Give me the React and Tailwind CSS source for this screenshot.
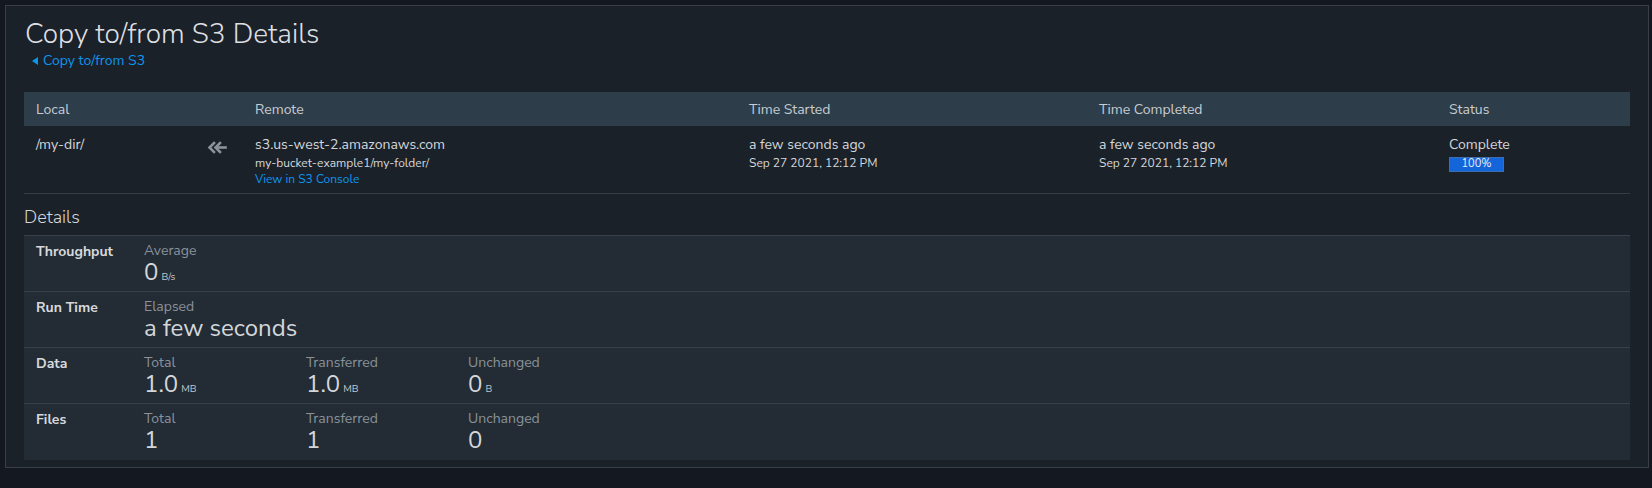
import React from 'react';

const font = { fontFamily: '"Nunito Sans", Lato, "Open Sans", sans-serif' };

const BackArrows = () => (
  <svg width="20" height="13" viewBox="0 0 20 13" fill="none" stroke="#8b939b" strokeWidth="2.6" strokeLinecap="square">
    <path d="M7 2 L2.5 6.5 L7 11" />
    <path d="M13 2 L8.5 6.5 L13 11" />
    <path d="M9.5 6.5 L18.5 6.5" />
  </svg>
);

const Stat = ({ label, value, unit }) => (
  <div className="w-[162px]">
    <div className="text-[14px] leading-[16px] text-[#89929a]">{label}</div>
    <div className="flex items-baseline leading-[26px] text-[#d3d7db]">
      <span className="text-[24px]">{value}</span>
      {unit && <span className="ml-[3px] text-[10px] text-[#c3c8cd]">{unit}</span>}
    </div>
  </div>
);

const DetailRow = ({ name, children, last }) => (
  <div className={`flex border-t border-[#36414b] pl-[12px] pt-[7px] ${last ? 'h-[57px]' : 'h-[56px]'}`}>
    <div className="w-[108px] text-[14px] font-bold leading-[18px] text-[#d6d9dc]">{name}</div>
    <div className="flex">{children}</div>
  </div>
);

export default function App() {
  const transfer = {
    local: '/my-dir/',
    host: 's3.us-west-2.amazonaws.com',
    path: 'my-bucket-example1/my-folder/',
    started: 'a few seconds ago',
    startedAt: 'Sep 27 2021, 12:12 PM',
    completed: 'a few seconds ago',
    completedAt: 'Sep 27 2021, 12:12 PM',
    status: 'Complete',
    progress: 100
  };

  return (
    <div className="h-[488px] w-[1652px] bg-[#141820] pt-[5px] pl-[5px]" style={font}>
      <div className="h-[463px] w-[1644px] border border-[#3a3f47] bg-[#1b2129] px-[18px] pt-[12px]">
        <h1 className="text-[28px] font-light leading-[32px] text-[#dcdfe2] pl-[1px]">Copy to/from S3 Details</h1>
        <a className="mt-[3px] flex items-center pl-[8px] text-[14px] leading-[16px] text-[#0b96ee]">
          <span className="mr-[5px] inline-block h-0 w-0 border-y-[4.5px] border-r-[6px] border-y-transparent border-r-[#0b96ee]" />
          Copy to/from S3
        </a>

        {/* transfer summary */}
        <div className="mt-[23px] grid grid-cols-[171px_48px_494px_350px_350px_1fr] text-[14px]">
          <div className="col-span-6 grid grid-cols-subgrid h-[34px] items-center bg-[#2d3d4a] text-[#c7ccd1]">
            <div className="pl-[12px]">Local</div>
            <div />
            <div className="pl-[12px]">Remote</div>
            <div className="pl-[12px]">Time Started</div>
            <div className="pl-[12px]">Time Completed</div>
            <div className="pl-[12px]">Status</div>
          </div>
          <div className="col-span-6 grid grid-cols-subgrid h-[68px] border-b border-[#333d47] pt-[10px] text-[#d3d7db]">
            <div className="pl-[12px] leading-[18px]">{transfer.local}</div>
            <div className="pt-[5px] pl-[12px]"><BackArrows /></div>
            <div className="pl-[12px]">
              <div className="leading-[18px]">{transfer.host}</div>
              <div className="text-[12px] leading-[18px]">{transfer.path}</div>
              <div className="text-[12px] leading-[15px] text-[#0b96ee]">View in S3 Console</div>
            </div>
            <div className="pl-[12px]">
              <div className="leading-[18px]">{transfer.started}</div>
              <div className="text-[12px] leading-[18px]">{transfer.startedAt}</div>
            </div>
            <div className="pl-[12px]">
              <div className="leading-[18px]">{transfer.completed}</div>
              <div className="text-[12px] leading-[18px]">{transfer.completedAt}</div>
            </div>
            <div className="pl-[12px]">
              <div className="leading-[18px]">{transfer.status}</div>
              <div className="mt-[3px] flex h-[15px] w-[55px] items-center justify-center border border-[#3d6fb0] bg-[#1565da] text-[11px] text-[#e6edf7]">
                {transfer.progress}%
              </div>
            </div>
          </div>
        </div>

        <h2 className="mt-[11px] text-[18px] font-light leading-[24px] text-[#d3d7db]">Details</h2>
        <div className="mt-[6px] bg-[#232c35]">
          <DetailRow name="Throughput">
            <Stat label="Average" value="0" unit="B/s" />
          </DetailRow>
          <DetailRow name="Run Time">
            <div>
              <div className="text-[14px] leading-[16px] text-[#89929a]">Elapsed</div>
              <div className="text-[24px] leading-[26px] text-[#d3d7db]">a few seconds</div>
            </div>
          </DetailRow>
          <DetailRow name="Data">
            <Stat label="Total" value="1.0" unit="MB" />
            <Stat label="Transferred" value="1.0" unit="MB" />
            <Stat label="Unchanged" value="0" unit="B" />
          </DetailRow>
          <DetailRow name="Files" last>
            <Stat label="Total" value="1" />
            <Stat label="Transferred" value="1" />
            <Stat label="Unchanged" value="0" />
          </DetailRow>
        </div>
      </div>
    </div>
  );
}
